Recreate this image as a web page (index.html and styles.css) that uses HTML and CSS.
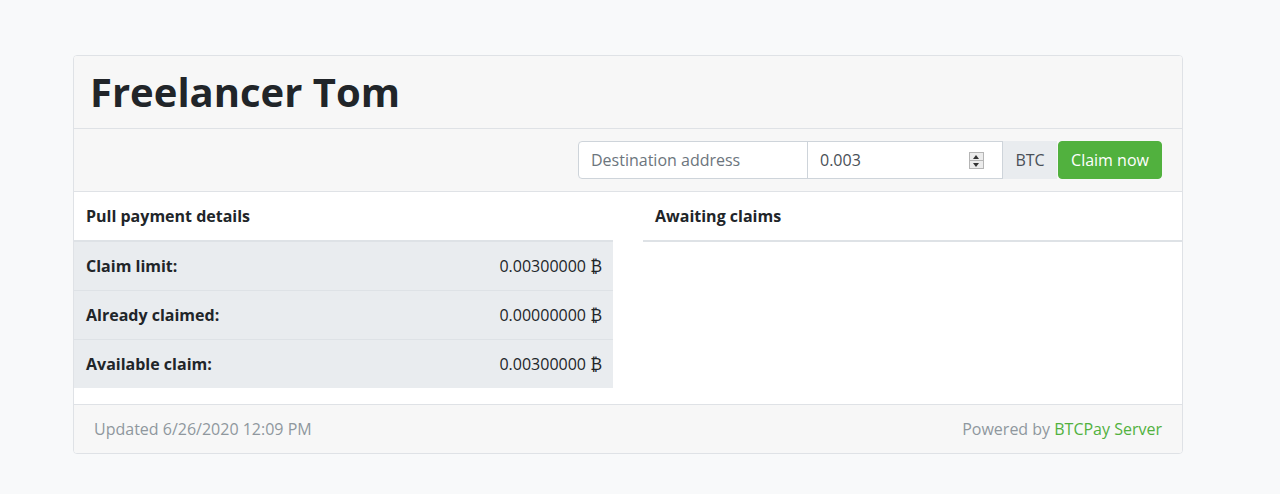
FILE: index.html
```html
<!DOCTYPE html>
<html>
<head>
<meta charset="utf-8">
<link rel="stylesheet" href="styles.css">
</head>
<body>
<div class="page">
  <div class="card">
    <div class="card-header">
      <h1 class="title">Freelancer Tom</h1>
    </div>
    <div class="claim-bar">
      <div class="claim-form">
        <input class="form-control dest" type="text" placeholder="Destination address">
        <div class="amount-wrap">
          <input class="form-control amount" type="text" value="0.003">
          <span class="spinner"><span class="spin-up"></span><span class="spin-down"></span></span>
        </div>
        <span class="addon">BTC</span>
        <button class="btn-claim">Claim now</button>
      </div>
    </div>
    <div class="card-body">
      <table class="details">
        <thead>
          <tr><th colspan="2">Pull payment details</th></tr>
        </thead>
        <tbody>
          <tr><td class="label">Claim limit:</td><td class="value">0.00300000 ₿</td></tr>
          <tr><td class="label">Already claimed:</td><td class="value">0.00000000 ₿</td></tr>
          <tr><td class="label">Available claim:</td><td class="value">0.00300000 ₿</td></tr>
        </tbody>
      </table>
      <table class="claims">
        <thead>
          <tr><th>Awaiting claims</th></tr>
        </thead>
        <tbody></tbody>
      </table>
    </div>
    <div class="card-footer">
      <span class="updated">Updated 6/26/2020 12:09 PM</span>
      <span class="powered">Powered by <a class="brand" href="#">BTCPay Server</a></span>
    </div>
  </div>
</div>
</body>
</html>
```

FILE: styles.css
```css
* { box-sizing: border-box; }
html, body { margin: 0; padding: 0; }
body {
  background: #f8f9fa;
  font-family: "Open Sans", "Liberation Sans", sans-serif;
  font-size: 16px;
  line-height: 24px;
  color: #212529;
}
.page {
  padding: 55px 97px 40px 73px;
}
.card {
  background: #fff;
  border: 1px solid #dfe2e6;
  border-radius: 4px;
  overflow: hidden;
}
.card-header {
  background: #f7f7f7;
  padding: 12px 16px;
  border-bottom: 1px solid #dfe2e6;
}
.title {
  margin: 0;
  font-size: 40px;
  line-height: 48px;
  font-weight: 700;
  color: #212529;
}
.claim-bar {
  background: #f7f7f7;
  padding: 12px 20px 12px 20px;
  border-bottom: 1px solid #dfe2e6;
  display: flex;
  justify-content: flex-end;
}
.claim-form {
  display: flex;
  height: 38px;
}
.form-control {
  height: 38px;
  border: 1px solid #ced4da;
  background: #fff;
  font-family: inherit;
  font-size: 16px;
  color: #495057;
  padding: 6px 12px;
  outline: none;
}
.form-control::placeholder { color: #6c757d; }
.dest {
  width: 230px;
  border-radius: 4px 0 0 4px;
}
.amount-wrap {
  position: relative;
  width: 196px;
  margin-left: -1px;
}
.amount {
  width: 100%;
  border-radius: 0;
}
.spinner {
  position: absolute;
  right: 19px;
  top: 11px;
  width: 15px;
  height: 17px;
  border: 1px solid #b5b5b5;
  background: #ececec;
  display: flex;
  flex-direction: column;
}
.spin-up, .spin-down {
  flex: 1;
  position: relative;
}
.spin-up { border-bottom: 1px solid #b5b5b5; }
.spin-up::after, .spin-down::after {
  content: "";
  position: absolute;
  left: 3px;
  width: 0;
  height: 0;
  border-left: 3.5px solid transparent;
  border-right: 3.5px solid transparent;
}
.spin-up::after { top: 2px; border-bottom: 4px solid #333; }
.spin-down::after { top: 2px; border-top: 4px solid #333; }
.addon {
  width: 54px;
  height: 38px;
  background: #e9ecef;
  color: #495057;
  border: 1px solid #e9ecef;
  display: flex;
  align-items: center;
  justify-content: center;
  font-size: 16px;
}
.btn-claim {
  margin-left: 1px;
  width: 104px;
  height: 38px;
  background: #51b13e;
  border: 1px solid #51b13e;
  border-radius: 4px;
  color: #fff;
  font-family: inherit;
  font-size: 16px;
  padding: 0 12px;
}
.card-body {
  display: grid;
  grid-template-columns: 1fr 1fr;
  column-gap: 30px;
  padding: 0;
  align-items: start;
}
table {
  border-collapse: collapse;
  width: 100%;
  margin-bottom: 16px;
}
th {
  text-align: left;
  font-weight: 700;
  padding: 12px;
  line-height: 24px;
  border-bottom: 2px solid #dee2e6;
}
.details tbody tr { background: #e9ecef; }
.details td {
  padding: 12px;
  border-top: 1px solid #dee2e6;
}
.details tbody tr:first-child td { border-top: 0; }
.label { font-weight: 700; }
.value { text-align: right; padding-right: 11px !important; }
.card-footer {
  background: #f7f7f7;
  border-top: 1px solid #dfe2e6;
  padding: 12px 20px;
  display: flex;
  justify-content: space-between;
  color: #8f979e;
}
.brand {
  color: #51b13e;
  text-decoration: none;
}
```
